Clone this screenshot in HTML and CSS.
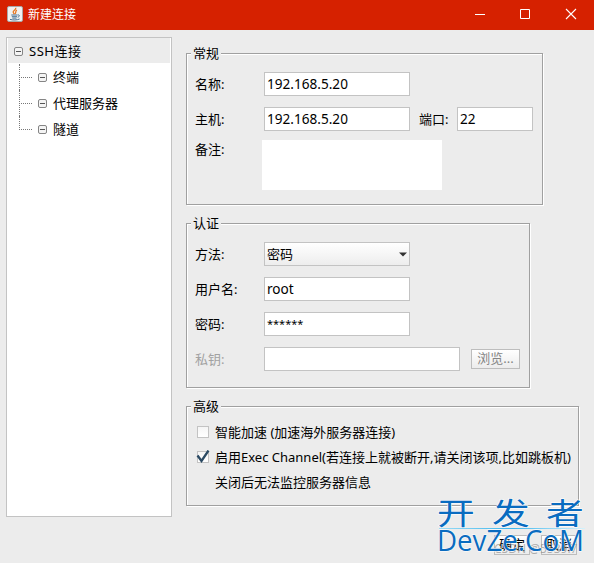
FILE: index.html
```html
<!DOCTYPE html>
<html lang="zh-CN">
<head>
  <meta charset="UTF-8" />
  <meta name="viewport" content="width=device-width, initial-scale=1.0" />
  <title>新建连接</title>
  <link rel="stylesheet" href="styles.css">
</head>

<body>
  <div class="titlebar">
    <svg class="app-icon" width="16" height="16" viewBox="0 0 16 16">
      <rect x="0.5" y="0.5" width="15" height="15" rx="1.5" fill="#f1f1f1" stroke="#a9a9a9" />
      <path d="M8.7 1.8C9.6 3.8 5.8 4.5 6.2 6.2C6.4 7 7 7.4 7.3 8.2M9.9 4.2C7.8 5.3 9.5 6.2 8.1 7.9" fill="none" stroke="#e87722" stroke-width="1.3" />
      <path d="M4.3 9H10.5M4.8 10.7H10M5.3 12.1H9.5M10.8 9C13 8.5 12.9 10.8 10.6 11.2M3 13.4C6 14.2 10 14.2 12.6 13" fill="none" stroke="#466f94" stroke-width="1" />
    </svg>
    <span class="title">新建连接</span>
    <svg class="controls" width="102" height="12" viewBox="0 0 102 12">
      <path d="M0 6.5H10M45.5 1.5H54.5V10.5H45.5Z" fill="none" stroke="#fff" />
      <path d="M91 1L101 11M101 1L91 11" fill="none" stroke="#fff" stroke-width="1.1" />
    </svg>
  </div>

  <div class="content">
    <ul class="tree">
      <li class="root"><i class="toggle"></i>SSH连接</li>
      <li class="leaf"><i class="toggle"></i>终端</li>
      <li class="leaf"><i class="toggle"></i>代理服务器</li>
      <li class="leaf last"><i class="toggle"></i>隧道</li>
    </ul>

    <form class="settings">
      <div class="group general">
        <h2>常规</h2>
        <div class="row"><label>名称:</label><div class="field">192.168.5.20</div></div>
        <div class="row">
          <label>主机:</label><div class="field">192.168.5.20</div>
          <label class="port-label">端口:</label><div class="field port">22</div>
        </div>
        <div class="row note-row"><label>备注:</label><div class="note"></div></div>
      </div>

      <div class="group auth">
        <h2>认证</h2>
        <div class="row">
          <label>方法:</label>
          <div class="field select">密码<svg width="8" height="5" viewBox="0 0 8 5"><path d="M0 0.5H8L4 4.5Z" fill="#333" /></svg></div>
        </div>
        <div class="row"><label>用户名:</label><div class="field">root</div></div>
        <div class="row"><label>密码:</label><div class="field password">******</div></div>
        <div class="row disabled"><label>私钥:</label><div class="field key"></div><div class="browse">浏览...</div></div>
      </div>

      <div class="group advanced">
        <h2>高级</h2>
        <div class="option"><i class="box"></i><span>智能加速 (加速海外服务器连接)</span></div>
        <div class="option">
          <i class="box"><svg width="14" height="14" viewBox="0 0 14 14"><path d="M1.5 5.5L5.5 11L12.5 0.5" fill="none" stroke="#2b4a63" stroke-width="2.3" /></svg></i>
          <span>启用Exec Channel(若连接上就被断开,请关闭该项,比如跳板机)</span>
        </div>
        <div class="option hint">关闭后无法监控服务器信息</div>
      </div>
    </form>
  </div>

  <div class="actions">
    <div class="action">确定</div>
    <div class="action">取消</div>
  </div>

  <div class="credit">CSDN @5539i7</div>

  <svg class="watermark" width="154" height="63" viewBox="0 0 154 63">
    <defs>
      <linearGradient id="line" x1="0" x2="1">
        <stop offset="0" stop-color="#9bdcf5" />
        <stop offset="0.5" stop-color="#3bb5ed" />
        <stop offset="1" stop-color="#d5f2fc" />
      </linearGradient>
    </defs>
    <g class="brand">
      <text class="cn" transform="translate(0 24.5) scale(1.26 1)">开</text>
      <text class="cn" transform="translate(55 24.5) scale(1.26 1)">发</text>
      <text class="cn" transform="translate(109 24.5) scale(1.26 1)">者</text>
      <text class="en" x="0" y="52" textLength="147" lengthAdjust="spacingAndGlyphs">DevZe.CoM</text>
    </g>
    <rect x="2" y="29" width="146" height="1" fill="url(#line)" />
  </svg>
</body>
</html>
```
FILE: styles.css
```css
* {
  box-sizing: border-box;
}

body {
  margin: 0;
  height: 563px;
  overflow: hidden;
  position: relative;
  background: #ececec;
  color: #000;
  font: 13px/20px "Noto Sans", "Noto Sans CJK SC", sans-serif;
  white-space: nowrap;
}

.titlebar {
  display: flex;
  align-items: center;
  height: 30px;
  padding: 0 17px 2px 7px;
  background: #d62100;
  color: #fff;
}

.title {
  margin: 2px auto 0 5px;
  font-size: 12px;
}

.content {
  display: flex;
  align-items: flex-start;
  gap: 14px;
  padding: 7px 0 0 6px;
}

.tree {
  width: 166px;
  height: 480px;
  margin: 0;
  padding: 0 1px;
  border: 1px solid #c3c3c3;
  background: #fff;
  list-style: none;
}

.tree li {
  display: flex;
  align-items: center;
  height: 26px;
  position: relative;
}

.tree .root {
  padding-left: 6px;
  background: linear-gradient(#ececec, #ececec) top / 100% 25px no-repeat;
  letter-spacing: 0.5px;
}

.tree .leaf {
  padding-left: 30px;
}

.leaf::before,
.leaf::after {
  content: "";
  position: absolute;
  left: 11px;
  top: 0;
}

.leaf::before {
  height: 26px;
  border-left: 1px dotted #777;
}

.leaf::after {
  top: 13px;
  width: 13px;
  border-top: 1px dotted #777;
}

.leaf.last::before {
  height: 14px;
}

.toggle {
  width: 9px;
  height: 9px;
  margin-right: 6px;
  border: 1px solid #858585;
  border-radius: 2px;
  background: linear-gradient(#555, #555) center / 5px 1px no-repeat #f4f4f4;
}

.settings {
  padding-top: 16px;
}

.group {
  position: relative;
  border: 1px solid #a0a0a0;
  box-shadow: 1px 1px 0 #fff, inset 1px 1px 0 #fff;
  padding: 18px 0 0 8px;
}

.group h2 {
  position: absolute;
  left: 4px;
  top: -11px;
  margin: 0;
  padding: 0 2px;
  background: #ececec;
  font-size: 13px;
  font-weight: normal;
}

.general {
  width: 357px;
  height: 152px;
}

.auth {
  width: 344px;
  height: 165px;
  margin-top: 18px;
}

.advanced {
  width: 393px;
  height: 100px;
  margin-top: 18px;
  padding-top: 15px;
}

.row {
  display: flex;
  align-items: center;
  height: 24px;
  margin-bottom: 11px;
}

.row label {
  width: 69px;
}

.field {
  width: 146px;
  height: 24px;
  padding: 1px 2px;
  border: 1px solid #c3c3c3;
  background: #fff;
  font-size: 13.6px;
}

.password {
  font-size: 11px;
  line-height: 20px;
}

.row .port-label {
  width: 38px;
  margin-left: 9px;
}

.port {
  width: 76px;
}

.note-row {
  height: 50px;
  margin-top: -2px;
  align-items: flex-start;
}

.note-row label {
  margin-top: -1px;
}

.note {
  width: 180px;
  height: 50px;
  margin-left: -2px;
  background: #fff;
}

.select {
  display: flex;
  align-items: center;
  justify-content: space-between;
  background: linear-gradient(#fff, #ededed);
  font-size: 13px;
}

.disabled {
  color: #a2a2a2;
}

.key {
  width: 196px;
}

.browse {
  width: 49px;
  height: 20px;
  margin-left: 11px;
  border: 1px solid #bdbdbd;
  background: linear-gradient(#fff, #ececec);
  color: #858585;
  line-height: 17px;
  text-align: center;
}

.option {
  display: flex;
  align-items: center;
  height: 20px;
  margin-bottom: 5px;
}

.box {
  width: 12px;
  height: 12px;
  margin: 0 6px 0 2px;
  border: 1px solid #c3c3c3;
  background: linear-gradient(#f5f5f5, #fff);
}

.box svg {
  display: block;
  margin: -2px;
}

.hint {
  padding-left: 20px;
}

.actions {
  position: absolute;
  left: 494px;
  top: 535px;
  display: flex;
  gap: 11px;
}

.action {
  width: 36px;
  height: 20px;
  border: 1px solid #bdbdbd;
  background: linear-gradient(#fff, #ececec);
  line-height: 17px;
  text-align: center;
}

.credit {
  position: absolute;
  left: 494px;
  top: 539px;
  color: rgba(130, 130, 130, 0.6);
  font-size: 12px;
}

.watermark {
  position: absolute;
  left: 437px;
  top: 499px;
  overflow: visible;
}

.brand {
  fill: #0a6cc0;
  stroke: #fff;
  stroke-width: 1px;
  paint-order: stroke;
}

.cn {
  font: 30px "Noto Sans CJK SC", sans-serif;
}

.en {
  font: 30px "Open Sans", sans-serif;
}
```
